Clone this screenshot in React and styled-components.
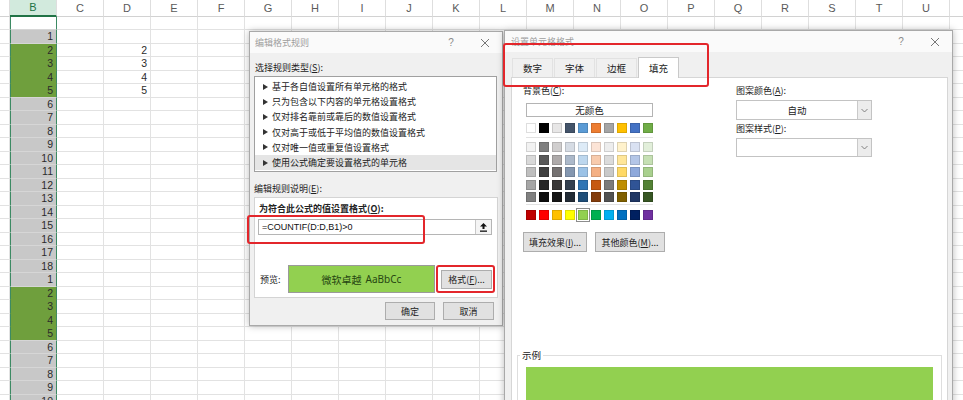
import React from 'react';
import styled, { createGlobalStyle } from 'styled-components';

const GlobalStyle = createGlobalStyle`
  html, body { margin: 0; padding: 0; background: #fff; }
  body { font-family: "Noto Sans CJK SC", "Noto Sans", sans-serif; }
`;

const CJK = `"Noto Sans CJK SC", "Noto Sans", sans-serif`;
const LATIN = `"Liberation Sans", Arial, sans-serif`;

const LETTERS = ['', 'B', 'C', 'D', 'E', 'F', 'G', 'H', 'I', 'J', 'K', 'L', 'M', 'N', 'O', 'P', 'Q', 'R', 'S', 'T', 'U', ''];
const B_VALUES = [null, ...Array.from({ length: 18 }, (_, i) => i + 1), ...Array.from({ length: 10 }, (_, i) => i + 1)];
const D_VALUES = { 2: '2', 3: '3', 4: '4', 5: '5' };

const RULES = [
  '基于各自值设置所有单元格的格式',
  '只为包含以下内容的单元格设置格式',
  '仅对排名靠前或靠后的数值设置格式',
  '仅对高于或低于平均值的数值设置格式',
  '仅对唯一值或重复值设置格式',
  '使用公式确定要设置格式的单元格',
];

const THEME_ROW = ['#ffffff', '#000000', '#e7e6e6', '#44546a', '#5b9bd5', '#ed7d31', '#a5a5a5', '#ffc000', '#4472c4', '#70ad47'];
const TINTS = [
  ['#f2f2f2', '#7f7f7f', '#d0cece', '#d6dce4', '#ddebf7', '#fce4d6', '#ededed', '#fff2cc', '#d9e1f2', '#e2efda'],
  ['#d9d9d9', '#595959', '#aeaaaa', '#acb9ca', '#bdd7ee', '#f8cbad', '#dbdbdb', '#ffe699', '#b4c6e7', '#c6e0b4'],
  ['#bfbfbf', '#404040', '#757171', '#8497b0', '#9bc2e6', '#f4b084', '#c9c9c9', '#ffd966', '#8ea9db', '#a9d08e'],
  ['#a6a6a6', '#262626', '#3a3838', '#333f4f', '#2f75b5', '#c65911', '#7b7b7b', '#bf8f00', '#305496', '#548235'],
  ['#808080', '#0d0d0d', '#161616', '#222b35', '#1f4e78', '#833c0c', '#525252', '#806000', '#203764', '#375623'],
];
const STANDARD = ['#c00000', '#ff0000', '#ffc000', '#ffff00', '#92d050', '#00b050', '#00b0f0', '#0070c0', '#002060', '#7030a0'];

/* ---------- spreadsheet ---------- */

const Screen = styled.div`
  position: relative;
  width: 963px;
  height: 400px;
  overflow: hidden;
  background: #fff;
`;

const Sheet = styled.div`
  display: grid;
  grid-template-columns: 10px repeat(21, 47px);
  grid-template-rows: 16.5px repeat(29, 13.5px);
`;

const HeadCell = styled.div`
  box-sizing: border-box;
  display: flex;
  align-items: center;
  justify-content: center;
  border-right: 1px solid #dedede;
  border-bottom: ${p => (p.$active ? '2px solid #217346' : '1px solid #d2d2d2')};
  background: ${p => (p.$active ? '#d2eadd' : '#fff')};
  color: ${p => (p.$active ? '#217346' : '#5a5a5a')};
  font: 11px ${LATIN};
`;

const Cell = styled.div`
  box-sizing: border-box;
  display: flex;
  align-items: center;
  justify-content: flex-end;
  padding-right: 3px;
  border-right: 1px solid #e2e2e2;
  border-bottom: 1px solid #e2e2e2;
  background: ${p => p.$fill || '#fff'};
  color: #2b2b2b;
  font: 10.5px ${LATIN};
  ${p => p.$sel && `
    border-left: 1px solid #3c8a63;
    border-right: 1px solid #3c8a63;
    border-bottom-color: ${p.$green ? p.$fill : '#d6d6d6'};
  `}
`;

function SpreadSheet() {
  return (
    <Sheet>
      {LETTERS.map((l, i) => (
        <HeadCell key={'h' + i} $active={l === 'B'}>{l}</HeadCell>
      ))}
      {B_VALUES.map((v, r) =>
        LETTERS.map((l, c) => {
          if (l === 'B') {
            const green = v !== null && v >= 2 && v <= 5;
            let fill = '#fff';
            if (v !== null) fill = green ? '#6f9f3d' : '#c8c8c8';
            const last = green && v === 5;
            return (
              <Cell key={r + '-' + c} $sel $green={green && !last} $fill={fill}>{v}</Cell>
            );
          }
          return <Cell key={r + '-' + c}>{l === 'D' ? D_VALUES[r] : null}</Cell>;
        })
      )}
    </Sheet>
  );
}

/* ---------- shared dialog parts ---------- */

const Window = styled.div`
  position: absolute;
  left: ${p => p.$left}px;
  top: ${p => p.$top}px;
  width: ${p => p.$width}px;
  height: ${p => p.$height}px;
  box-sizing: border-box;
  display: flex;
  flex-direction: column;
  background: #f0f0f0;
  border: 1px solid #a9a9a9;
  box-shadow: 0 0 7px rgba(0, 0, 0, 0.28);
  font-family: ${CJK};
  font-size: 9px;
  color: #222;
`;

const TitleBar = styled.div`
  flex: none;
  height: 21px;
  display: flex;
  align-items: center;
  padding-left: ${p => p.$pad}px;
  background: #fafafa;
  color: #9e9e9e;
`;

const TitleText = styled.span`
  flex: 1;
  font-size: 9px;
`;

const TitleBtn = styled.span`
  width: 34px;
  height: 21px;
  display: flex;
  align-items: center;
  justify-content: center;
  color: #8a8a8a;
  font: 10px ${LATIN};
`;

const Highlight = styled.div`
  position: absolute;
  left: ${p => p.$x}px;
  top: ${p => p.$y}px;
  width: ${p => p.$w}px;
  height: ${p => p.$h}px;
  box-sizing: border-box;
  border: 2px solid #e3262b;
  border-radius: 3px;
  pointer-events: none;
`;

const Button = styled.div`
  box-sizing: border-box;
  width: ${p => p.$w}px;
  height: ${p => p.$h || 18}px;
  display: flex;
  align-items: center;
  justify-content: center;
  background: #e1e1e1;
  border: 1px solid #adadad;
  font-size: 9px;
  color: #222;
  white-space: nowrap;
`;

const Label = styled.div`
  line-height: 14px;
  padding-left: ${p => p.$indent || 0}px;
  margin-top: ${p => p.$mt || 0}px;
  font-weight: ${p => (p.$bold ? 700 : 400)};
  white-space: nowrap;
`;

const CloseIcon = () => (
  <svg width="10" height="10" viewBox="0 0 10 10">
    <path d="M1 1 L9 9 M9 1 L1 9" stroke="#777" strokeWidth="1" fill="none" />
  </svg>
);

function Titles({ title, pad }) {
  return (
    <TitleBar $pad={pad}>
      <TitleText>{title}</TitleText>
      <TitleBtn>?</TitleBtn>
      <TitleBtn><CloseIcon /></TitleBtn>
    </TitleBar>
  );
}

/* ---------- 编辑格式规则 ---------- */

const RuleBody = styled.div`
  display: flex;
  flex-direction: column;
  padding: 0 5px 0 4px;
`;

const RuleList = styled.div`
  box-sizing: border-box;
  width: 243px;
  height: 96px;
  margin-top: 1px;
  padding-top: 2px;
  background: #fff;
  border: 1px solid #a0a0a0;
`;

const RuleItem = styled.div`
  display: flex;
  align-items: center;
  height: 15.2px;
  padding-left: 8px;
  background: ${p => (p.$selected ? '#e5e5e5' : 'transparent')};
  white-space: nowrap;
`;

const Arrow = styled.span`
  width: 0;
  height: 0;
  margin-right: 4px;
  border-left: 5px solid #333;
  border-top: 3px solid transparent;
  border-bottom: 3px solid transparent;
`;

const GroupBox = styled.div`
  box-sizing: border-box;
  width: 244px;
  height: 101px;
  margin-top: 1px;
  padding: 4px 5px 0 3px;
  display: flex;
  flex-direction: column;
  background: #fff;
  border: 1px solid #d4d4d4;
`;

const FormulaInput = styled.div`
  box-sizing: border-box;
  width: 234px;
  height: 16px;
  margin-top: 3px;
  display: flex;
  align-items: stretch;
  border: 1px solid #b5b5b5;
  background: #fff;
`;

const FormulaText = styled.div`
  flex: 1;
  display: flex;
  align-items: center;
  padding-left: 3px;
  font: 9px ${LATIN};
  color: #111;
`;

const CollapseBtn = styled.div`
  width: 15px;
  display: flex;
  align-items: center;
  justify-content: center;
  border-left: 1px solid #c8c8c8;
  background: #f4f4f4;
`;

const PreviewRow = styled.div`
  display: flex;
  align-items: center;
  margin-top: 30px;
`;

const PreviewLabel = styled.span`
  width: 28px;
  padding-left: 2px;
`;

const PreviewBox = styled.div`
  box-sizing: border-box;
  width: 147px;
  height: 28px;
  margin-right: 6px;
  display: flex;
  align-items: center;
  justify-content: center;
  gap: 4px;
  background: #92d050;
  border: 1px solid #9a9a9a;
  color: #264612;
  font-size: 10px;
`;

const PreviewLatin = styled.span`
  font-family: "Noto Sans", sans-serif;
  font-size: 10px;
`;

const Footer = styled.div`
  display: flex;
  justify-content: flex-end;
  gap: 8px;
  margin-top: 4px;
  padding-right: 3px;
`;

function RuleDialog() {
  return (
    <Window $left={249} $top={31} $width={254} $height={295}>
      <Titles title="编辑格式规则" pad={5} />
      <RuleBody>
        <Label $mt={8} $indent={1}>选择规则类型(<u>S</u>):</Label>
        <RuleList>
          {RULES.map((r, i) => (
            <RuleItem key={r} $selected={i === RULES.length - 1}>
              <Arrow />
              {r}
            </RuleItem>
          ))}
        </RuleList>
        <Label $mt={10}>编辑规则说明(<u>E</u>):</Label>
        <GroupBox>
          <Label $bold $indent={1}>为符合此公式的值设置格式(<u>O</u>):</Label>
          <FormulaInput>
            <FormulaText>=COUNTIF(D:D,B1)&gt;0</FormulaText>
            <CollapseBtn>
              <svg width="7" height="9" viewBox="0 0 7 9">
                <path d="M3.5 0 L7 3.5 L4.5 3.5 L4.5 6 L2.5 6 L2.5 3.5 L0 3.5 Z" fill="#111" />
                <rect x="0" y="7.5" width="7" height="1.3" fill="#111" />
              </svg>
            </CollapseBtn>
          </FormulaInput>
          <PreviewRow>
            <PreviewLabel>预览:</PreviewLabel>
            <PreviewBox>
              <span>微软卓越</span>
              <PreviewLatin>AaBbCc</PreviewLatin>
            </PreviewBox>
            <Button $w={51} $h={19}>格式(<u>F</u>)...</Button>
          </PreviewRow>
        </GroupBox>
        <Footer>
          <Button $w={50}>确定</Button>
          <Button $w={51}>取消</Button>
        </Footer>
      </RuleBody>
      <Highlight $x={-3} $y={183} $w={178} $h={29} />
      <Highlight $x={186} $y={233} $w={59} $h={28} />
    </Window>
  );
}

/* ---------- 设置单元格格式 ---------- */

const TabStrip = styled.div`
  flex: none;
  height: 25px;
  display: flex;
  align-items: flex-end;
  padding-left: 7px;
`;

const Tab = styled.div`
  box-sizing: border-box;
  width: 41px;
  height: ${p => (p.$active ? 21 : 19)}px;
  margin-right: 1px;
  display: flex;
  align-items: center;
  justify-content: center;
  font-size: 9.5px;
  background: ${p => (p.$active ? '#fff' : '#f0f0f0')};
  border: 1px solid ${p => (p.$active ? '#c9c9c9' : '#e2e2e2')};
  border-bottom: none;
  position: relative;
  z-index: ${p => (p.$active ? 1 : 0)};
  margin-bottom: ${p => (p.$active ? -1 : 0)}px;
`;

const PanelWrap = styled.div`
  flex: 1;
  display: flex;
  padding: 0 4px 0 6px;
`;

const Panel = styled.div`
  flex: 1;
  box-sizing: border-box;
  display: flex;
  flex-direction: column;
  padding: 6px 0 0 0;
  background: #fff;
  border: 1px solid #d6d6d6;
`;

const Columns = styled.div`
  display: flex;
  padding-left: 11px;
`;

const LeftCol = styled.div`
  width: 213px;
  display: flex;
  flex-direction: column;
`;

const RightCol = styled.div`
  display: flex;
  flex-direction: column;
`;

const NoColor = styled.div`
  box-sizing: border-box;
  width: 127px;
  height: 14px;
  margin: 5px 0 0 3px;
  display: flex;
  align-items: center;
  justify-content: center;
  border: 1px solid #b4b4b4;
  background: #fff;
  font-size: 9.5px;
`;

const SwatchGrid = styled.div`
  display: grid;
  grid-template-columns: repeat(10, 10px);
  column-gap: 3px;
  row-gap: 2.5px;
  margin: ${p => p.$mt || 0}px 0 0 3px;
`;

const Swatch = styled.div`
  width: 10px;
  height: 10px;
  box-sizing: border-box;
  background: ${p => p.$color};
  box-shadow: inset 0 0 0 1px rgba(0, 0, 0, 0.13);
  ${p => p.$picked && 'outline: 1px solid #8d8d8d; outline-offset: 1px;'}
`;

const Divider = styled.div`
  width: 127px;
  height: 1px;
  margin: ${p => p.$m};
  margin-left: 3px;
  background: #e2e2e2;
`;

const ButtonRow = styled.div`
  display: flex;
  gap: 8px;
  margin-top: 12px;
`;

const Combo = styled.div`
  box-sizing: border-box;
  width: 136px;
  height: ${p => p.$h}px;
  margin-top: 2px;
  display: flex;
  border: 1px solid #c3c3c3;
  background: #fff;
`;

const ComboValue = styled.div`
  flex: 1;
  display: flex;
  align-items: center;
  justify-content: center;
  font-size: 9.5px;
`;

const ComboArrow = styled.div`
  width: 13px;
  display: flex;
  align-items: center;
  justify-content: center;
  background: #ececec;
  border-left: 1px solid #c9c9c9;
`;

const Sample = styled.fieldset`
  box-sizing: border-box;
  width: 425px;
  margin: 97px 0 0 5px;
  padding: 6px 8px 0 8px;
  min-inline-size: 0;
  border: 1px solid #dedede;
`;

const SampleLegend = styled.legend`
  margin-left: -6px;
  padding: 0 2px;
  font-size: 9.5px;
  line-height: 12px;
`;

const SampleFill = styled.div`
  height: 60px;
  background: #92d050;
`;

const Chevron = () => (
  <svg width="7" height="5" viewBox="0 0 7 5">
    <path d="M0.5 1 L3.5 4 L6.5 1" stroke="#777" strokeWidth="0.9" fill="none" />
  </svg>
);

function FormatDialog() {
  return (
    <Window $left={504} $top={30} $width={449} $height={390}>
      <Titles title="设置单元格格式" pad={6} />
      <TabStrip>
        {['数字', '字体', '边框', '填充'].map(t => (
          <Tab key={t} $active={t === '填充'}>{t}</Tab>
        ))}
      </TabStrip>
      <PanelWrap>
        <Panel>
          <Columns>
            <LeftCol>
              <Label>背景色(<u>C</u>):</Label>
              <NoColor>无颜色</NoColor>
              <SwatchGrid $mt={6}>
                {THEME_ROW.map((c, i) => <Swatch key={i} $color={c} />)}
              </SwatchGrid>
              <Divider $m="4px 0 4px" />
              <SwatchGrid>
                {TINTS.flat().map((c, i) => <Swatch key={i} $color={c} />)}
              </SwatchGrid>
              <Divider $m="2px 0 5px" />
              <SwatchGrid>
                {STANDARD.map((c, i) => <Swatch key={i} $color={c} $picked={c === '#92d050'} />)}
              </SwatchGrid>
              <ButtonRow>
                <Button $w={64} $h={20}>填充效果(<u>I</u>)...</Button>
                <Button $w={70} $h={20}>其他颜色(<u>M</u>)...</Button>
              </ButtonRow>
            </LeftCol>
            <RightCol>
              <Label>图案颜色(<u>A</u>):</Label>
              <Combo $h={20}>
                <ComboValue>自动</ComboValue>
                <ComboArrow><Chevron /></ComboArrow>
              </Combo>
              <Label $mt={2}>图案样式(<u>P</u>):</Label>
              <Combo $h={19}>
                <ComboValue />
                <ComboArrow><Chevron /></ComboArrow>
              </Combo>
            </RightCol>
          </Columns>
          <Sample>
            <SampleLegend>示例</SampleLegend>
            <SampleFill />
          </Sample>
        </Panel>
      </PanelWrap>
      <Highlight $x={-2} $y={12} $w={206} $h={44} />
    </Window>
  );
}

export default function App() {
  return (
    <>
      <GlobalStyle />
      <Screen>
        <SpreadSheet />
        <RuleDialog />
        <FormatDialog />
      </Screen>
    </>
  );
}
